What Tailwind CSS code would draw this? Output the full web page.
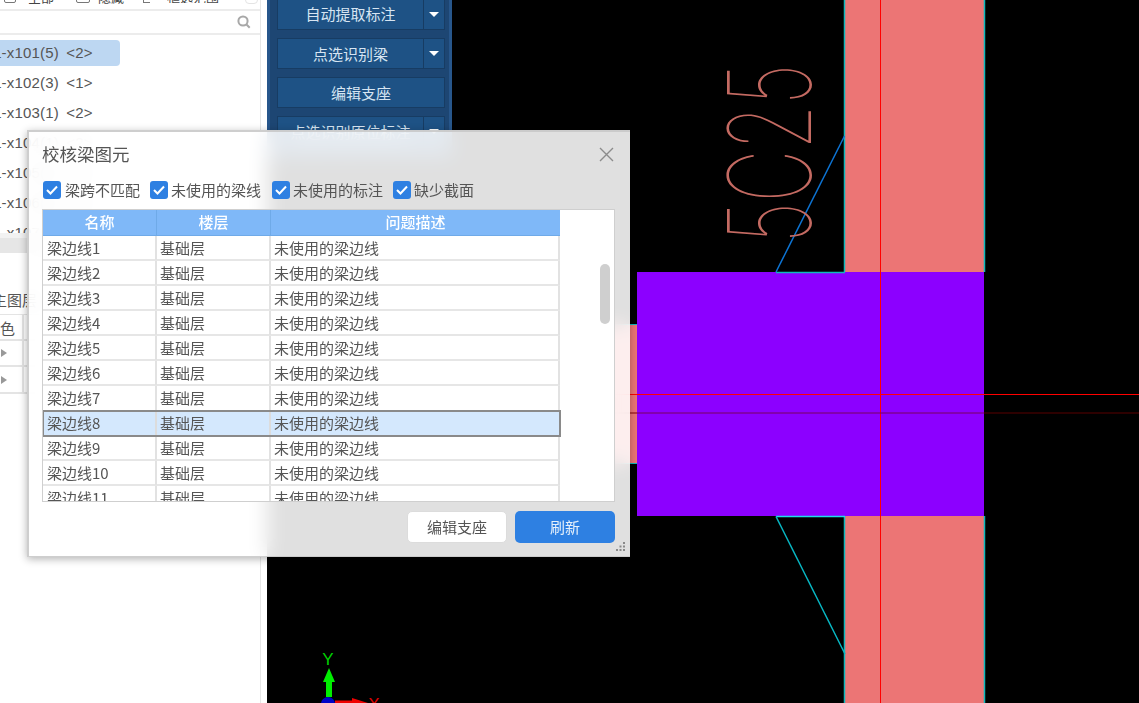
<!DOCTYPE html>
<html lang="zh-CN">
<head>
<meta charset="utf-8">
<title>校核梁图元</title>
<script src="https://cdn.jsdelivr.net/npm/@tailwindcss/browser@4"></script>
</head>
<body class="m-0 bg-white">
<div class="relative flex w-[1139px] h-[703px] overflow-hidden bg-white text-[15px] text-[#555] font-['Noto_Sans_CJK_SC','Noto_Sans',sans-serif]">

  <!-- left panel -->
  <aside class="w-[267px] shrink-0 bg-white">
    <div class="w-[261px] h-full flex flex-col border-r border-[#e6e6e6]">
      <div class="h-[11px] shrink-0 overflow-hidden border-b-2 border-[#ececec] relative">
        <div class="flex items-end h-[3px] text-[13px] leading-none pl-[4px] text-[#444]">
          <span class="w-[12px] h-[12px] border border-[#777] rounded-[2px] shrink-0"></span><span class="w-[30px] ml-[12px] shrink-0">全部</span>
          <span class="w-[14px] h-[12px] ml-[18px] border border-[#777] rounded-[2px] shrink-0"></span><span class="w-[28px] ml-[8px] shrink-0">隐藏</span>
          <span class="w-[7px] h-[12px] ml-[17px] border-l border-b border-[#777] shrink-0"></span><span class="w-[62px] ml-[17px] shrink-0 overflow-hidden whitespace-nowrap">框选范围</span>
        </div>
        <span class="absolute left-[245px] -top-[8px] w-[13px] h-[12px] rounded-[4px] border border-[#e4e4e4]"></span>
      </div>
      <div class="h-[24px] shrink-0 border-b-2 border-[#ececec] flex items-center justify-end pr-[9px]">
        <svg width="14" height="14" viewBox="0 0 14 14" fill="none" stroke="#a8a8a8" stroke-width="2"><circle cx="6" cy="6" r="4.6"/><path d="M9.5 9.5l3.2 3.2"/></svg>
      </div>
      <div class="h-[198px] shrink-0 overflow-hidden pt-[5px] leading-[26px] whitespace-nowrap [word-spacing:3px] font-['Liberation_Sans','Noto_Sans_CJK_SC',sans-serif] tracking-[0.2px]">
        <div class="w-[120px] h-[26px] rounded-r-[4px] bg-[#bdd7f2] overflow-hidden"><span class="block -ml-[7px]">L-x101(5) &lt;2&gt;</span></div>
        <div class="h-[26px] mt-[4px] -ml-[7px]">L-x102(3) &lt;1&gt;</div>
        <div class="h-[26px] mt-[4px] -ml-[7px]">L-x103(1) &lt;2&gt;</div>
        <div class="h-[26px] mt-[4px] -ml-[7px]">L-x104(1) &lt;2&gt;</div>
        <div class="h-[26px] mt-[4px] -ml-[7px]">L-x105(1) &lt;2&gt;</div>
        <div class="h-[26px] mt-[4px] -ml-[7px]">L-x106(1) &lt;2&gt;</div>
        <div class="h-[26px] mt-[4px] -ml-[7px]">L-x107(1) &lt;2&gt;</div>
      </div>
      <div class="h-[20px] shrink-0 bg-[#e6e6e6] border-t-[5px] border-[#f2f2f2]"></div>
      <div class="h-[62px] shrink-0 border-b border-[#e4e4e4] flex items-end pb-[4px] overflow-hidden"><span class="-ml-[8px] leading-[20px] whitespace-nowrap">主图层</span></div>
      <div class="h-[26px] shrink-0 border-b-2 border-[#e4e4e4] flex">
        <div class="w-[24px] border-r-2 border-[#e4e4e4] leading-[26px]">色</div>
      </div>
      <div class="h-[26px] shrink-0 border-b-2 border-[#e4e4e4] flex">
        <div class="w-[24px] border-r-2 border-[#e4e4e4] flex items-center pl-[1px]"><span class="w-0 h-0 border-y-[4px] border-y-transparent border-l-[6px] border-l-[#999]"></span></div>
      </div>
      <div class="h-[27px] shrink-0 border-b-2 border-[#e4e4e4] flex">
        <div class="w-[24px] border-r-2 border-[#e4e4e4] flex items-center pl-[1px]"><span class="w-0 h-0 border-y-[4px] border-y-transparent border-l-[6px] border-l-[#999]"></span></div>
      </div>
    </div>
  </aside>

  <!-- CAD canvas -->
  <main class="relative flex-1 bg-black">
    <svg class="absolute inset-0" width="872" height="703" viewBox="267 0 872 703" fill="none">
      <rect x="845" y="0" width="139" height="703" fill="#ec7575"/>
      <path d="M844.5 0V272M984.5 0V272M844.5 516V703M984.5 516V703" stroke="#10b8bc" stroke-width="1.5"/>
      <rect x="500" y="324" width="137" height="139" fill="#ec7575"/>
      <path d="M500 324.5H637M500 463.5H637" stroke="#10b8bc"/>
      <rect x="637" y="272" width="347" height="244" fill="#8c00ff"/>
      <path d="M776 272.5H845" stroke="#10b8bc" stroke-width="1.5"/>
      <path d="M776 272L844.5 136" stroke="#0d74d4" stroke-width="1.5"/>
      <path d="M776 516.5H845" stroke="#1fdde8" stroke-width="1.5"/>
      <path d="M776 516.5L845 654" stroke="#08b8c4" stroke-width="1.5"/>
      <path d="M880.5 0V703" stroke="#ff0000"/>
      <path d="M500 394.5H1139" stroke="#ff0000"/>
      <path d="M500 413H637" stroke="#800000"/>
      <path d="M637 413H984" stroke="#78005c"/>
      <path d="M984 413H1139" stroke="#5a0000"/>
      <text transform="translate(811,243) rotate(-90)" font-family="Inter" font-weight="100" font-size="115" textLength="179" lengthAdjust="spacingAndGlyphs" fill="#c46a62">5C25</text>
      <!-- axis -->
      <path d="M326 697V682H323L329 668L335 682H332V697Z" fill="#00ee00"/>
      <path d="M335 700.5H352V698L368 703H335Z" fill="#f00000"/>
      <circle cx="328" cy="704" r="7" fill="#0000c8"/>
      <text x="328" y="665" text-anchor="middle" font-family="Liberation Sans" font-size="17" fill="#00d000">Y</text>
      <text x="374" y="710" text-anchor="middle" font-family="Liberation Sans" font-size="17" fill="#e00000">X</text>
    </svg>

    <!-- blue tool panel -->
    <div class="absolute left-0 top-0 w-[185px] h-[158px] bg-[#1d4673] border-x-[3px] border-[#27568b] pl-[7px] pr-[4px] flex flex-col gap-[8px] text-[15px] text-[#d7e5f2]">
      <div class="h-[31px] shrink-0 -mt-px flex bg-[#1e5285] border border-[#173c63]">
        <div class="flex-1 text-center leading-[28px] border-r border-[#173c63]">自动提取标注</div>
        <div class="w-[20px] flex items-center justify-center"><span class="w-0 h-0 border-x-[5px] border-x-transparent border-t-[5px] border-t-white"></span></div>
      </div>
      <div class="h-[31px] shrink-0 flex bg-[#1e5285] border border-[#173c63]">
        <div class="flex-1 text-center leading-[30px] border-r border-[#173c63]">点选识别梁</div>
        <div class="w-[20px] flex items-center justify-center"><span class="w-0 h-0 border-x-[5px] border-x-transparent border-t-[5px] border-t-white"></span></div>
      </div>
      <div class="h-[31px] shrink-0 bg-[#1e5285] border border-[#173c63] text-center leading-[29px]">编辑支座</div>
      <div class="h-[31px] shrink-0 flex bg-[#1e5285] border border-[#173c63]">
        <div class="flex-1 text-center leading-[30px] border-r border-[#173c63]">点选识别原位标注</div>
        <div class="w-[20px] flex items-center justify-center"><span class="w-0 h-0 border-x-[5px] border-x-transparent border-t-[5px] border-t-white"></span></div>
      </div>
    </div>
  </main>

  <!-- dialog -->
  <section class="absolute left-[27px] top-[130px] w-[603px] h-[427px] border-2 border-[#c9c9c9]/90 border-r-0 border-b bg-white/88 backdrop-blur-[10px] shadow-[0_2px_8px_rgba(0,0,0,0.3)] flex flex-col pl-[13px]">
    <header class="h-[48px] shrink-0 flex items-center justify-between pr-[16px] pb-[4px]">
      <h1 class="text-[17.5px] font-normal leading-none text-[#555]">校核梁图元</h1>
      <svg width="15" height="15" viewBox="0 0 15 15" stroke="#8c8c8c" stroke-width="1.4" fill="none"><path d="M1 1l13 13M14 1L1 14"/></svg>
    </header>
    <div class="h-[20px] shrink-0 flex items-center gap-[10px] pl-[1px]">
      <label class="flex items-center gap-[4px]">
        <span class="w-[18px] h-[18px] rounded-[3px] bg-[#2e80e2] flex items-center justify-center"><svg width="12" height="10" viewBox="0 0 12 10" fill="none" stroke="#fff" stroke-width="2"><path d="M1 5l3.5 3.5L11 1.5"/></svg></span>梁跨不匹配</label>
      <label class="flex items-center gap-[3px]">
        <span class="w-[18px] h-[18px] rounded-[3px] bg-[#2e80e2] flex items-center justify-center"><svg width="12" height="10" viewBox="0 0 12 10" fill="none" stroke="#fff" stroke-width="2"><path d="M1 5l3.5 3.5L11 1.5"/></svg></span>未使用的梁线</label>
      <label class="flex items-center gap-[3px] ml-[1px]">
        <span class="w-[18px] h-[18px] rounded-[3px] bg-[#2e80e2] flex items-center justify-center"><svg width="12" height="10" viewBox="0 0 12 10" fill="none" stroke="#fff" stroke-width="2"><path d="M1 5l3.5 3.5L11 1.5"/></svg></span>未使用的标注</label>
      <label class="flex items-center gap-[3px]">
        <span class="w-[18px] h-[18px] rounded-[3px] bg-[#2e80e2] flex items-center justify-center"><svg width="12" height="10" viewBox="0 0 12 10" fill="none" stroke="#fff" stroke-width="2"><path d="M1 5l3.5 3.5L11 1.5"/></svg></span>缺少截面</label>
    </div>

    <div class="relative mt-[9px] w-[573px] h-[293px] shrink-0 bg-white border border-[#cfcfcf] overflow-hidden">
      <div class="w-[517px] leading-[24px]">
        <div class="grid grid-cols-[114px_114px_289px] h-[26px] bg-[#7fb8f8] text-white text-center font-medium border-b border-[#6faae8]">
          <div class="border-r border-[#6faae8]">名称</div><div class="border-r border-[#6faae8]">楼层</div><div>问题描述</div>
        </div>
        <div class="grid grid-cols-[114px_114px_289px] h-[25px] border-b-2 border-[#e6e6e6]"><div class="pl-[4px] border-r-2 border-[#e2e2e2]">梁边线1</div><div class="pl-[3px] border-r-2 border-[#e2e2e2]">基础层</div><div class="pl-[3px] border-r-2 border-[#e2e2e2]">未使用的梁边线</div></div>
        <div class="grid grid-cols-[114px_114px_289px] h-[25px] border-b-2 border-[#e6e6e6]"><div class="pl-[4px] border-r-2 border-[#e2e2e2]">梁边线2</div><div class="pl-[3px] border-r-2 border-[#e2e2e2]">基础层</div><div class="pl-[3px] border-r-2 border-[#e2e2e2]">未使用的梁边线</div></div>
        <div class="grid grid-cols-[114px_114px_289px] h-[25px] border-b-2 border-[#e6e6e6]"><div class="pl-[4px] border-r-2 border-[#e2e2e2]">梁边线3</div><div class="pl-[3px] border-r-2 border-[#e2e2e2]">基础层</div><div class="pl-[3px] border-r-2 border-[#e2e2e2]">未使用的梁边线</div></div>
        <div class="grid grid-cols-[114px_114px_289px] h-[25px] border-b-2 border-[#e6e6e6]"><div class="pl-[4px] border-r-2 border-[#e2e2e2]">梁边线4</div><div class="pl-[3px] border-r-2 border-[#e2e2e2]">基础层</div><div class="pl-[3px] border-r-2 border-[#e2e2e2]">未使用的梁边线</div></div>
        <div class="grid grid-cols-[114px_114px_289px] h-[25px] border-b-2 border-[#e6e6e6]"><div class="pl-[4px] border-r-2 border-[#e2e2e2]">梁边线5</div><div class="pl-[3px] border-r-2 border-[#e2e2e2]">基础层</div><div class="pl-[3px] border-r-2 border-[#e2e2e2]">未使用的梁边线</div></div>
        <div class="grid grid-cols-[114px_114px_289px] h-[25px] border-b-2 border-[#e6e6e6]"><div class="pl-[4px] border-r-2 border-[#e2e2e2]">梁边线6</div><div class="pl-[3px] border-r-2 border-[#e2e2e2]">基础层</div><div class="pl-[3px] border-r-2 border-[#e2e2e2]">未使用的梁边线</div></div>
        <div class="grid grid-cols-[114px_114px_289px] h-[25px]"><div class="pl-[4px] border-r-2 border-[#e2e2e2]">梁边线7</div><div class="pl-[3px] border-r-2 border-[#e2e2e2]">基础层</div><div class="pl-[3px] border-r-2 border-[#e2e2e2]">未使用的梁边线</div></div>
        <div class="grid grid-cols-[114px_114px_289px] h-[25px] bg-[#d4e8fd] outline-2 -outline-offset-1 outline-[#8a8a8a]"><div class="pl-[4px] border-r-2 border-[#dcdcdc]">梁边线8</div><div class="pl-[3px] border-r-2 border-[#dcdcdc]">基础层</div><div class="pl-[3px]">未使用的梁边线</div></div>
        <div class="grid grid-cols-[114px_114px_289px] h-[25px] border-b-2 border-[#e6e6e6]"><div class="pl-[4px] border-r-2 border-[#e2e2e2]">梁边线9</div><div class="pl-[3px] border-r-2 border-[#e2e2e2]">基础层</div><div class="pl-[3px] border-r-2 border-[#e2e2e2]">未使用的梁边线</div></div>
        <div class="grid grid-cols-[114px_114px_289px] h-[25px] border-b-2 border-[#e6e6e6]"><div class="pl-[4px] border-r-2 border-[#e2e2e2]">梁边线10</div><div class="pl-[3px] border-r-2 border-[#e2e2e2]">基础层</div><div class="pl-[3px] border-r-2 border-[#e2e2e2]">未使用的梁边线</div></div>
        <div class="grid grid-cols-[114px_114px_289px] h-[25px]"><div class="pl-[4px] border-r-2 border-[#e2e2e2]">梁边线11</div><div class="pl-[3px] border-r-2 border-[#e2e2e2]">基础层</div><div class="pl-[3px] border-r-2 border-[#e2e2e2]">未使用的梁边线</div></div>
      </div>
      <div class="absolute left-[557px] top-[54px] w-[10px] h-[60px] rounded-full bg-[#cfcfcf]"></div>
    </div>

    <footer class="relative flex justify-end gap-[8px] pr-[15px] mt-[9px] text-[15px]">
      <button class="w-[100px] h-[32px] rounded-[5px] bg-white border border-[#dcdcdc] text-[#555]">编辑支座</button>
      <button class="w-[100px] h-[32px] rounded-[5px] bg-[#2e80e2] text-[#e6f0fb]">刷新</button>
      <svg class="absolute right-[4px] top-[31px]" width="10" height="10" viewBox="0 0 10 10" fill="#8a8a8a"><rect x="7" y="0" width="2" height="2"/><rect x="3.500" y="3.500" width="2" height="2"/><rect x="7" y="3.500" width="2" height="2"/><rect x="0" y="7" width="2" height="2"/><rect x="3.500" y="7" width="2" height="2"/><rect x="7" y="7" width="2" height="2"/></svg>
    </footer>
  </section>
</div>
</body>
</html>
